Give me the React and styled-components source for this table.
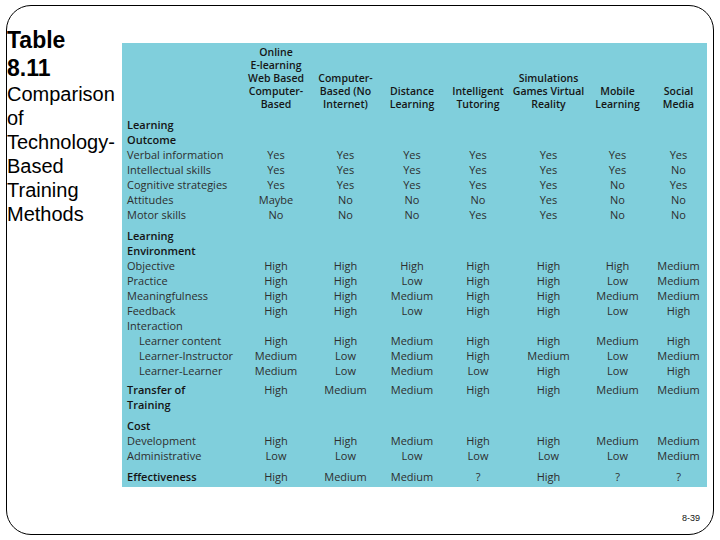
import React from 'react';
import styled, { createGlobalStyle } from 'styled-components';

const GlobalStyle = createGlobalStyle`
  html, body {
    margin: 0;
    padding: 0;
    background: #ffffff;
  }
  body {
    width: 720px;
    height: 540px;
    overflow: hidden;
  }
`;

const Frame = styled.div`
  box-sizing: border-box;
  width: 708px;
  height: 530px;
  margin: 5px 6px;
  border: 1px solid #000;
  border-radius: 25px;
  display: flex;
  flex-direction: column;
`;

const Body = styled.div`
  display: flex;
  align-items: flex-start;
`;

const TitleBlock = styled.div`
  width: 115px;
  margin-top: 20px;
  font-family: 'Liberation Sans', Arial, sans-serif;
  color: #000;
`;

const TitleStrong = styled.div`
  font-size: 23px;
  font-weight: 700;
  line-height: 28px;
`;

const TitleText = styled.div`
  font-size: 20px;
  line-height: 24px;
`;

const Panel = styled.div`
  margin-top: 37px;
  width: 585px;
  height: 444px;
  padding-top: 3px;
  box-sizing: border-box;
  background: #80cfdc;
`;

const Table = styled.table`
  border-collapse: collapse;
  border-spacing: 0;
  table-layout: fixed;
  width: 585px;
  font-family: 'Open Sans', 'Noto Sans', sans-serif;
  font-size: 11px;
  color: #2e2e2e;
`;

const HeadCell = styled.th`
  padding: 0 0 6px;
  vertical-align: bottom;
  text-align: center;
  font-weight: 600;
  font-size: 10.5px;
  line-height: 13px;
  white-space: nowrap;
  color: #161616;
`;

const Row = styled.tr`
  & > td {
    padding-top: ${(p) => p.$gap || 0}px;
  }
`;

const LabelCell = styled.td`
  padding: 0 0 0 ${(p) => (p.$indent ? 17 : 5)}px;
  line-height: 15px;
  vertical-align: top;
  white-space: nowrap;
  font-weight: ${(p) => (p.$bold ? 600 : 400)};
  color: ${(p) => (p.$bold ? '#141414' : '#2e2e2e')};
`;

const ValueCell = styled.td`
  padding: 0;
  line-height: 15px;
  vertical-align: top;
  text-align: center;
  white-space: nowrap;
`;

const Footer = styled.div`
  margin-top: auto;
  display: flex;
  justify-content: flex-end;
  padding: 0 13px 11px 0;
  font-family: 'Liberation Sans', Arial, sans-serif;
  font-size: 9px;
  color: #111;
`;

const widths = [119, 70, 69, 64, 68, 73, 65, 57];

const headers = [
  ['Online', 'E-learning', 'Web Based', 'Computer-', 'Based'],
  ['Computer-', 'Based (No', 'Internet)'],
  ['Distance', 'Learning'],
  ['Intelligent', 'Tutoring'],
  ['Simulations', 'Games Virtual', 'Reality'],
  ['Mobile', 'Learning'],
  ['Social', 'Media'],
];

const rows = [
  { label: ['Learning', 'Outcome'], bold: true },
  { label: ['Verbal information'], values: ['Yes', 'Yes', 'Yes', 'Yes', 'Yes', 'Yes', 'Yes'] },
  { label: ['Intellectual skills'], values: ['Yes', 'Yes', 'Yes', 'Yes', 'Yes', 'Yes', 'No'] },
  { label: ['Cognitive strategies'], values: ['Yes', 'Yes', 'Yes', 'Yes', 'Yes', 'No', 'Yes'] },
  { label: ['Attitudes'], values: ['Maybe', 'No', 'No', 'No', 'Yes', 'No', 'No'] },
  { label: ['Motor skills'], values: ['No', 'No', 'No', 'Yes', 'Yes', 'No', 'No'] },
  { label: ['Learning', 'Environment'], bold: true, gap: 6 },
  { label: ['Objective'], values: ['High', 'High', 'High', 'High', 'High', 'High', 'Medium'] },
  { label: ['Practice'], values: ['High', 'High', 'Low', 'High', 'High', 'Low', 'Medium'] },
  { label: ['Meaningfulness'], values: ['High', 'High', 'Medium', 'High', 'High', 'Medium', 'Medium'] },
  { label: ['Feedback'], values: ['High', 'High', 'Low', 'High', 'High', 'Low', 'High'] },
  { label: ['Interaction'] },
  { label: ['Learner content'], indent: true, values: ['High', 'High', 'Medium', 'High', 'High', 'Medium', 'High'] },
  { label: ['Learner-Instructor'], indent: true, values: ['Medium', 'Low', 'Medium', 'High', 'Medium', 'Low', 'Medium'] },
  { label: ['Learner-Learner'], indent: true, values: ['Medium', 'Low', 'Medium', 'Low', 'High', 'Low', 'High'] },
  { label: ['Transfer of', 'Training'], bold: true, gap: 4, values: ['High', 'Medium', 'Medium', 'High', 'High', 'Medium', 'Medium'] },
  { label: ['Cost'], bold: true, gap: 6 },
  { label: ['Development'], values: ['High', 'High', 'Medium', 'High', 'High', 'Medium', 'Medium'] },
  { label: ['Administrative'], values: ['Low', 'Low', 'Low', 'Low', 'Low', 'Low', 'Medium'] },
  { label: ['Effectiveness'], bold: true, gap: 6, values: ['High', 'Medium', 'Medium', '?', 'High', '?', '?'] },
];

const Lines = ({ lines }) =>
  lines.map((line, i) => (
    <React.Fragment key={i}>
      {i > 0 && <br />}
      {line}
    </React.Fragment>
  ));

const App = () => {
  return (
    <>
      <GlobalStyle />
      <Frame>
        <Body>
          <TitleBlock>
            <TitleStrong>Table</TitleStrong>
            <TitleStrong>8.11</TitleStrong>
            <TitleText>Comparison</TitleText>
            <TitleText>of</TitleText>
            <TitleText>Technology-</TitleText>
            <TitleText>Based</TitleText>
            <TitleText>Training</TitleText>
            <TitleText>Methods</TitleText>
          </TitleBlock>
          <Panel>
            <Table>
              <colgroup>
                {widths.map((w, i) => (
                  <col key={i} style={{ width: w }} />
                ))}
              </colgroup>
              <thead>
                <tr>
                  <HeadCell />
                  {headers.map((h, i) => (
                    <HeadCell key={i}>
                      <Lines lines={h} />
                    </HeadCell>
                  ))}
                </tr>
              </thead>
              <tbody>
                {rows.map((r, i) => (
                  <Row key={i} $gap={r.gap}>
                    <LabelCell $bold={r.bold} $indent={r.indent}>
                      <Lines lines={r.label} />
                    </LabelCell>
                    {(r.values || ['', '', '', '', '', '', '']).map((v, j) => (
                      <ValueCell key={j}>{v}</ValueCell>
                    ))}
                  </Row>
                ))}
              </tbody>
            </Table>
          </Panel>
        </Body>
        <Footer>8-39</Footer>
      </Frame>
    </>
  );
};

export default App;
